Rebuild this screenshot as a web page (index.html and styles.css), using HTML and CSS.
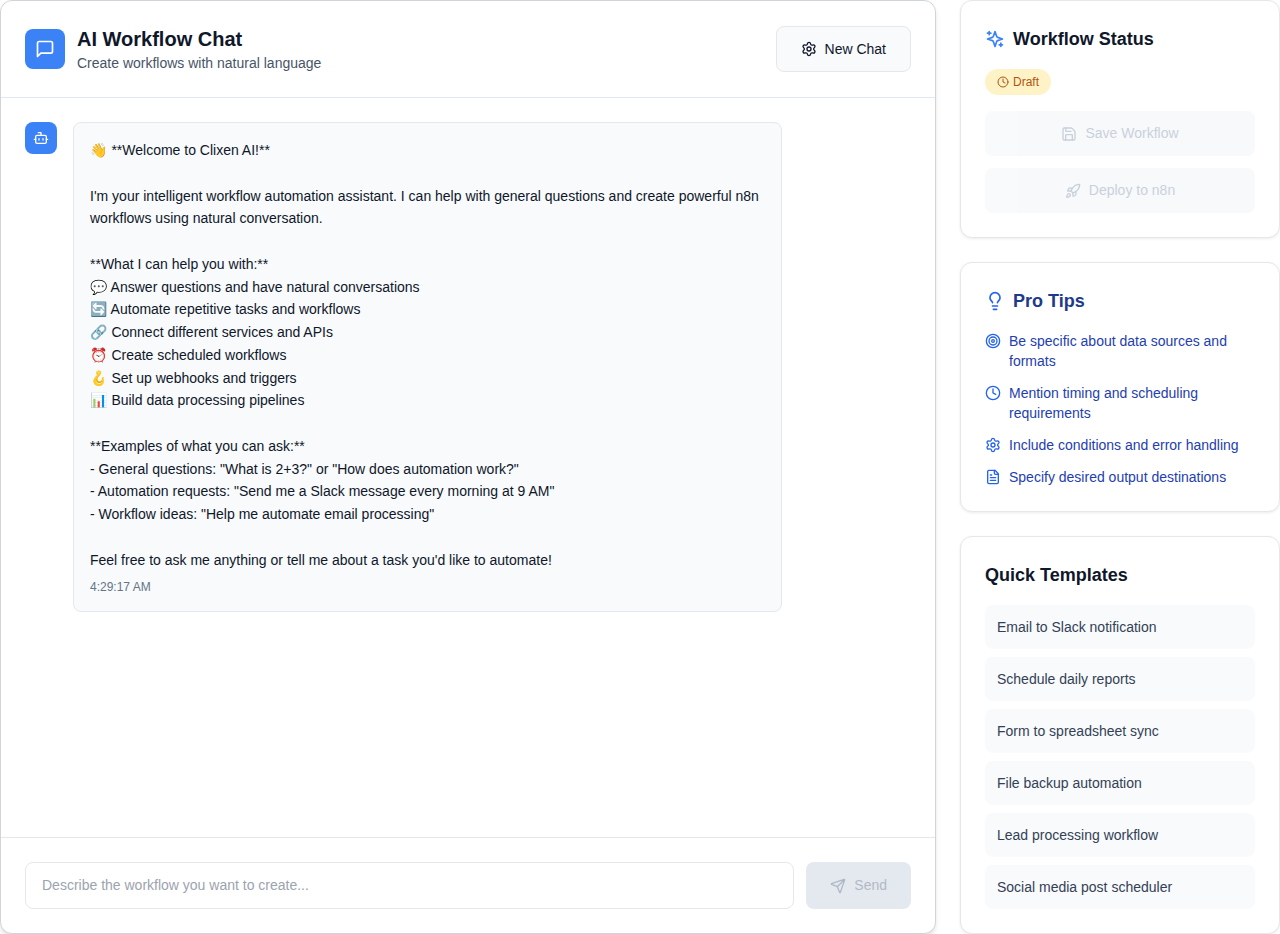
FILE: index.html
```html
<!DOCTYPE html>
<html lang="en">
<head>
<meta charset="utf-8">
<title>AI Workflow Chat</title>
<link rel="stylesheet" href="styles.css">
</head>
<body>
<svg class="defs" aria-hidden="true">
  <symbol id="message" viewBox="0 0 24 24"><path d="M21 15a2 2 0 0 1-2 2H7l-4 4V5a2 2 0 0 1 2-2h14a2 2 0 0 1 2 2z"/></symbol>
  <symbol id="bot" viewBox="0 0 24 24"><path d="M12 8V4H8"/><rect width="16" height="12" x="4" y="8" rx="2"/><path d="M2 14h2M20 14h2M15 13v2M9 13v2"/></symbol>
  <symbol id="gear" viewBox="0 0 24 24"><path d="M9.671 4.136a2.34 2.34 0 0 1 4.659 0 2.34 2.34 0 0 0 3.319 1.915 2.34 2.34 0 0 1 2.33 4.033 2.34 2.34 0 0 0 0 3.831 2.34 2.34 0 0 1-2.33 4.033 2.34 2.34 0 0 0-3.319 1.915 2.34 2.34 0 0 1-4.659 0 2.34 2.34 0 0 0-3.32-1.915 2.34 2.34 0 0 1-2.33-4.033 2.34 2.34 0 0 0 0-3.831A2.34 2.34 0 0 1 6.35 6.051a2.34 2.34 0 0 0 3.319-1.915"/><circle cx="12" cy="12" r="3"/></symbol>
  <symbol id="sparkles" viewBox="0 0 24 24"><path d="m12 3-1.912 5.813a2 2 0 0 1-1.275 1.275L3 12l5.813 1.912a2 2 0 0 1 1.275 1.275L12 21l1.912-5.813a2 2 0 0 1 1.275-1.275L21 12l-5.813-1.912a2 2 0 0 1-1.275-1.275L12 3Z"/><path d="M5 3v4M19 17v4M3 5h4M17 19h4"/></symbol>
  <symbol id="clock" viewBox="0 0 24 24"><circle cx="12" cy="12" r="10"/><path d="M12 6v6l4 2"/></symbol>
  <symbol id="save" viewBox="0 0 24 24"><path d="M15.200 3a2 2 0 0 1 1.400.600l3.800 3.800a2 2 0 0 1 .600 1.400V19a2 2 0 0 1-2 2H5a2 2 0 0 1-2-2V5a2 2 0 0 1 2-2z"/><path d="M17 21v-7a1 1 0 0 0-1-1H8a1 1 0 0 0-1 1v7M7 3v4a1 1 0 0 0 1 1h7"/></symbol>
  <symbol id="rocket" viewBox="0 0 24 24"><path d="M4.500 16.500c-1.500 1.260-2 5-2 5s3.740-.500 5-2c.710-.840.700-2.130-.090-2.910a2.180 2.180 0 0 0-2.910-.090zM12 15l-3-3a22 22 0 0 1 2-3.950A12.880 12.880 0 0 1 22 2c0 2.720-.780 7.500-6 11a22.350 22.350 0 0 1-4 2z"/><path d="M9 12H4s.550-3.030 2-4c1.620-1.080 5 0 5 0M12 15v5s3.030-.550 4-2c1.080-1.620 0-5 0-5"/></symbol>
  <symbol id="bulb" viewBox="0 0 24 24"><path d="M15 14c.200-1 .700-1.700 1.500-2.500 1-.900 1.500-2.200 1.500-3.500A6 6 0 0 0 6 8c0 1 .200 2.200 1.500 3.500.700.700 1.300 1.500 1.500 2.500M9 18h6M10 22h4"/></symbol>
  <symbol id="target" viewBox="0 0 24 24"><circle cx="12" cy="12" r="10"/><circle cx="12" cy="12" r="6"/><circle cx="12" cy="12" r="2"/></symbol>
  <symbol id="file" viewBox="0 0 24 24"><path d="M15 2H6a2 2 0 0 0-2 2v16a2 2 0 0 0 2 2h12a2 2 0 0 0 2-2V7Z"/><path d="M14 2v4a2 2 0 0 0 2 2h4M10 9H8M16 13H8M16 17H8"/></symbol>
  <symbol id="send" viewBox="0 0 24 24"><path d="M14.536 21.686a.5.5 0 0 0 .937-.024l6.500-19a.496.496 0 0 0-.635-.635l-19 6.500a.5.5 0 0 0-.024.937l7.930 3.180a2 2 0 0 1 1.112 1.110zM21.854 2.147l-10.940 10.939"/></symbol>
</svg>
<div class="layout">
  <main class="chat">
    <header class="chat-header">
      <div class="logo"><svg class="icon icon-lg"><use href="#message"/></svg></div>
      <div class="heading">
        <h1>AI Workflow Chat</h1>
        <p>Create workflows with natural language</p>
      </div>
      <button class="btn btn-new"><svg class="icon"><use href="#gear"/></svg>New Chat</button>
    </header>
    <section class="messages">
      <div class="avatar"><svg class="icon"><use href="#bot"/></svg></div>
      <article class="bubble">
        <div class="bubble-text"><span class="emoji">👋</span> **Welcome to Clixen AI!**

I'm your intelligent workflow automation assistant. I can help with general questions and create powerful n8n workflows using natural conversation.

**What I can help you with:**
<span class="emoji">💬</span> Answer questions and have natural conversations
<span class="emoji">🔄</span> Automate repetitive tasks and workflows
<span class="emoji">🔗</span> Connect different services and APIs
<span class="emoji">⏰</span> Create scheduled workflows
<span class="emoji">🪝</span> Set up webhooks and triggers
<span class="emoji">📊</span> Build data processing pipelines

**Examples of what you can ask:**
- General questions: "What is 2+3?" or "How does automation work?"
- Automation requests: "Send me a Slack message every morning at 9 AM"
- Workflow ideas: "Help me automate email processing"

Feel free to ask me anything or tell me about a task you'd like to automate!</div>
        <time>4:29:17 AM</time>
      </article>
    </section>
    <footer class="composer">
      <input type="text" placeholder="Describe the workflow you want to create...">
      <button class="btn btn-send" disabled><svg class="icon"><use href="#send"/></svg><span class="label">Send</span></button>
    </footer>
  </main>
  <aside class="sidebar">
    <section class="card">
      <h2><svg class="icon icon-lg accent"><use href="#sparkles"/></svg>Workflow Status</h2>
      <span class="badge"><svg class="icon icon-sm"><use href="#clock"/></svg>Draft</span>
      <div class="actions">
        <button class="btn btn-action" disabled><svg class="icon"><use href="#save"/></svg><span class="label">Save Workflow</span></button>
        <button class="btn btn-action" disabled><svg class="icon"><use href="#rocket"/></svg><span class="label">Deploy to n8n</span></button>
      </div>
    </section>
    <section class="card tips">
      <h2><svg class="icon icon-lg"><use href="#bulb"/></svg>Pro Tips</h2>
      <ul>
        <li><svg class="icon"><use href="#target"/></svg>Be specific about data sources and formats</li>
        <li><svg class="icon"><use href="#clock"/></svg>Mention timing and scheduling requirements</li>
        <li><svg class="icon"><use href="#gear"/></svg>Include conditions and error handling</li>
        <li><svg class="icon"><use href="#file"/></svg>Specify desired output destinations</li>
      </ul>
    </section>
    <section class="card">
      <h2>Quick Templates</h2>
      <div class="templates">
        <button>Email to Slack notification</button>
        <button>Schedule daily reports</button>
        <button>Form to spreadsheet sync</button>
        <button>File backup automation</button>
        <button>Lead processing workflow</button>
        <button>Social media post scheduler</button>
      </div>
    </section>
  </aside>
</div>
</body>
</html>
```
FILE: styles.css
```css
* { box-sizing: border-box; margin: 0; padding: 0; }
body { background: #fff; color: #0f172a; font: 14px/20px "Liberation Sans", Arial, sans-serif; overflow: hidden; }
button, input { font: inherit; color: inherit; border: 0; }
.defs { position: absolute; width: 0; height: 0; }
.icon { width: 16px; height: 16px; flex: none; fill: none; stroke: currentColor; stroke-width: 2; stroke-linecap: round; stroke-linejoin: round; }
.icon-lg { width: 20px; height: 20px; }
.icon-sm { width: 12px; height: 12px; }

.layout { display: grid; grid-template-columns: 936px 320px; gap: 24px; height: 934px; }
.chat { display: flex; flex-direction: column; background: #fff; border: 1px solid #d1d5db; border-radius: 12px; box-shadow: 0 4px 6px -1px rgba(0,0,0,.1), 0 2px 4px -2px rgba(0,0,0,.1); }
.chat-header { display: flex; align-items: center; gap: 12px; padding: 24px; border-bottom: 1px solid #e2e8f0; }
.logo, .avatar { display: flex; align-items: center; justify-content: center; flex: none; background: #3b82f6; color: #fff; border-radius: 8px; }
.logo { width: 40px; height: 40px; }
.avatar { width: 32px; height: 32px; }
.heading { flex: 1; }
h1 { font-size: 20px; line-height: 28px; }
.heading p { color: #475569; }

.btn { display: flex; align-items: center; justify-content: center; gap: 8px; border-radius: 8px; padding: 12px 24px; }
.btn-new { background: #f8fafc; border: 1px solid #e5e7eb; }
.label { padding-bottom: 1px; }

.messages { flex: 1; display: flex; align-items: flex-start; gap: 16px; padding: 24px; }
.bubble { width: 709px; padding: 16px; background: #f8fafc; border: 1px solid #e2e8f0; border-radius: 8px; }
.bubble-text { white-space: pre-wrap; line-height: 22.75px; }
.emoji { margin-right: .5px; }
.bubble time { display: block; margin-top: 8px; font-size: 12px; line-height: 16px; color: #64748b; }

.composer { display: flex; gap: 12px; padding: 24px; border-top: 1px solid #e5e7eb; }
.composer input { flex: 1; height: 47px; padding: 11px 16px 13px; border: 1px solid #e5e7eb; border-radius: 8px; background: #fff; }
.composer input::placeholder { color: #9ca3af; }
.btn-send { background: #cbd5e1; color: #64748b; opacity: .5; }

.sidebar { display: flex; flex-direction: column; gap: 24px; }
.card { padding: 24px; background: #fff; border: 1px solid #e5e7eb; border-radius: 12px; box-shadow: 0 1px 3px rgba(0,0,0,.08); }
h2 { display: flex; align-items: center; gap: 8px; margin-bottom: 16px; font-size: 18px; line-height: 28px; }
.accent { color: #3b82f6; }
.badge { display: flex; align-items: center; gap: 4px; width: fit-content; height: 26px; padding: 0 12px; border-radius: 13px; background: #fef3c7; color: #b45309; font-size: 12px; }
.actions { display: grid; gap: 12px; margin-top: 16px; }
.btn-action { height: 45px; background: #f1f5f9; color: #94a3b8; opacity: .5; }

.tips h2 { color: #1e3a8a; }
.tips .icon { color: #2563eb; }
.tips ul { display: grid; gap: 12px; list-style: none; color: #1e40af; }
.tips li { display: flex; gap: 8px; }
.tips li .icon { margin-top: 2px; }

.templates { display: grid; gap: 8px; }
.templates button { padding: 12px; border-radius: 8px; background: #f8fafc; color: #334155; text-align: left; }
```
